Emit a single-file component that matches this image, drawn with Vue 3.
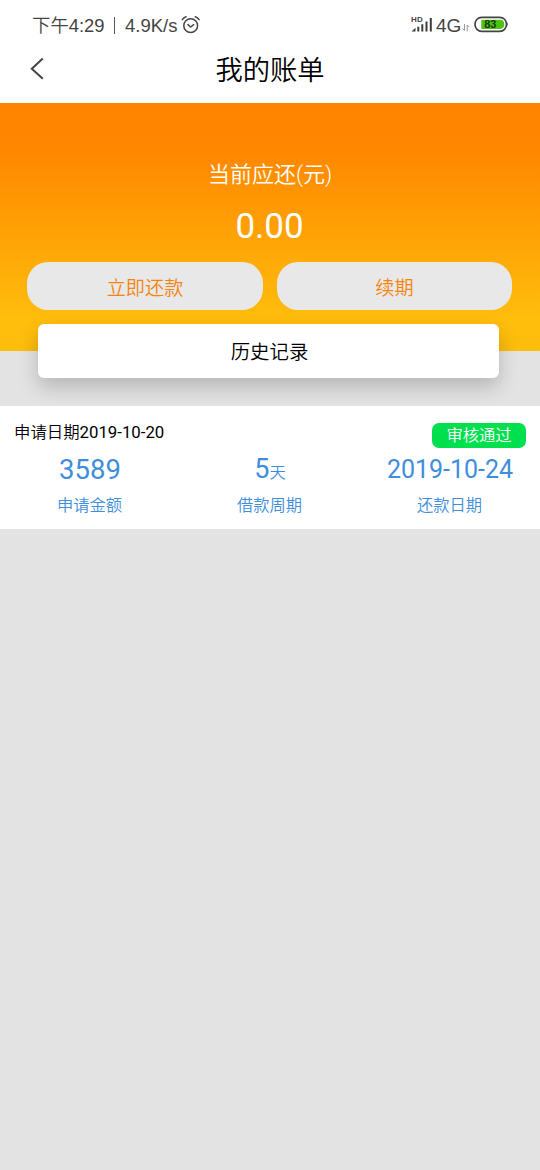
<script setup>
const stats = [
  { value: '3589', unit: '', label: '申请金额', kind: 'amount' },
  { value: '5', unit: '天', label: '借款周期', kind: 'term' },
  { value: '2019-10-24', unit: '', label: '还款日期', kind: 'due' },
]
</script>

<template>
  <div class="screen">
    <header>
      <div class="status">
        <span class="clock">下午4:29</span>
        <i class="divider"></i>
        <span class="speed">4.9K/s</span>
        <svg class="alarm" width="20" height="20" viewBox="0 0 20 20" fill="none" stroke="#444" stroke-width="1.5" stroke-linecap="round" stroke-linejoin="round">
          <circle cx="9.7" cy="10.7" r="6.9" />
          <path d="M7 9.6 9.7 12l3-2.3M1.3 4.7Q2.7 2.5 5.1 1.8M18.1 4.7Q16.7 2.5 14.3 1.8" />
        </svg>
        <span class="spacer"></span>
        <span class="signal">
          <b>HD</b>
          <svg width="22" height="16" viewBox="0 0 22 16" fill="#3c3c3c">
            <path d="M0.5 14.5 4.5 10.7v3.8zM6.3 9.7h2v4.8h-2zM10.3 7.2h2v7.3h-2zM14.5 4.4h2v10.1h-2zM18.8 1h2v13.5h-2z" />
          </svg>
        </span>
        <span class="net">4G</span>
        <svg class="updown" width="8" height="8" viewBox="0 0 8 8" fill="none" stroke="#999" stroke-width="1">
          <path d="M2.5 0v6.5L.5 4.5M5.2 7.5V1l2 2" />
        </svg>
        <svg class="battery" width="36" height="18" viewBox="0 0 36 18">
          <rect x="1" y="1.3" width="31.5" height="14" rx="6.7" fill="#fff" stroke="#444" stroke-width="1.7" />
          <path d="M33.4 5.8q1.5 2.5 0 5z" fill="#444" />
          <path d="M7.3 3.7H26q4.3 0 4.3 4.6T26 12.9H7.3z" fill="#4fc314" />
          <text x="16.3" y="12.3" text-anchor="middle">83</text>
        </svg>
      </div>
      <div class="nav">
        <svg class="back" width="16" height="24" viewBox="0 0 16 24" fill="none" stroke="#444" stroke-width="2">
          <path d="M12.8 1.4 1.8 11.7 12.8 21.8" />
        </svg>
        <h1>我的账单</h1>
      </div>
    </header>

    <section class="hero">
      <p class="caption">当前应还(元)</p>
      <p class="total">0.00</p>
      <div class="actions">
        <button>立即还款</button>
        <button>续期</button>
      </div>
    </section>

    <div class="history">历史记录</div>

    <article class="record">
      <div class="top">
        <span class="applied">申请日期<span class="date">2019-10-20</span></span>
        <span class="badge">审核通过</span>
      </div>
      <div class="stats">
        <div v-for="s in stats" :key="s.kind" class="stat">
          <div class="value" :class="s.kind">{{ s.value }}<small v-if="s.unit">{{ s.unit }}</small></div>
          <div class="label">{{ s.label }}</div>
        </div>
      </div>
    </article>
  </div>
</template>

<style>
body { background: #e3e3e3; }
</style>

<style scoped>
* { box-sizing: border-box; }
.screen {
  height: 1170px;
  background: #e3e3e3;
  color: #000;
  font-family: Roboto, "Noto Sans CJK SC", sans-serif;
  font-weight: 400;
  overflow: hidden;
}
p, h1 { margin: 0; font-weight: inherit; }
header { height: 103px; background: #fff; }
.status {
  height: 50px;
  padding: 0 30px 0 32px;
  display: flex;
  align-items: center;
  color: #444;
  white-space: nowrap;
  font-family: "Liberation Sans", "Noto Sans CJK SC", sans-serif;
  font-size: 19px;
  line-height: 24px;
}
.clock { width: 73px; padding-top: 1px; font-size: 18.4px; font-weight: 350; }
.divider { width: 1px; height: 17px; margin: 0 10px 0 9px; background: #555; }
.speed { width: 56px; padding-top: 1px; font-size: 18.5px; }
.spacer { flex: 1; }
.signal { position: relative; width: 22px; height: 16px; margin-right: 3px; }
.signal svg { display: block; }
.signal b { position: absolute; left: 0; top: -1px; font-size: 8px; line-height: 8px; letter-spacing: 0.2px; }
.net { width: 26px; padding-top: 1px; }
.updown { margin: 6px 4px 0 0; }
.battery { width: 36px; }
.battery text { font: bold 11px "Liberation Sans", sans-serif; fill: #143c08; }
.nav { height: 53px; display: flex; align-items: flex-start; }
.back { margin: 7px 0 0 30px; }
h1 { flex: 1; margin: 1px 46px 0 0; text-align: center; font-size: 27.3px; font-weight: 350; line-height: 40px; }
.hero {
  height: 248px;
  padding-top: 56px;
  background: linear-gradient(#ff8400 0%, #ff8600 18%, #ffbe0c 88%, #fdbd0d 100%);
  color: #fff;
  text-align: center;
}
.caption { font-size: 22px; font-weight: 350; line-height: 32px; }
.total { margin-top: 15px; padding-right: 1px; font-size: 35px; line-height: 42px; }
.actions { display: grid; grid-template-columns: 236px 235px; gap: 14px; margin: 14px 0 0 27px; }
button {
  height: 48px;
  padding: 1px 0 0;
  border: 0;
  border-radius: 21px;
  background: #e8e8e8;
  color: #f5840c;
  font: inherit;
  font-size: 19.2px;
  font-weight: 350;
}
.history {
  position: relative;
  width: 461px;
  height: 54px;
  margin: -27px 0 28px 38px;
  padding: 2px 0 0 2px;
  border-radius: 6px;
  background: #fff;
  box-shadow: 0 9px 20px rgba(0, 0, 0, 0.2);
  font-size: 19.4px;
  font-weight: 350;
  line-height: 54px;
  text-align: center;
}
.record { height: 123px; background: #fff; }
.top { height: 45px; padding: 0 14px; display: flex; justify-content: space-between; }
.applied { padding-top: 14px; font-size: 16.4px; font-weight: 350; line-height: 24px; }
.date { font-size: 16.8px; font-weight: 400; }
.badge {
  width: 94px;
  height: 25px;
  margin-top: 17px;
  border-radius: 7px;
  background: #00e04f;
  color: #fff;
  font-size: 16.3px;
  font-weight: 350;
  line-height: 25px;
  text-align: center;
}
.stats { display: grid; grid-template-columns: repeat(3, 1fr); color: #3f8edc; text-align: center; }
.value { height: 38px; line-height: 38px; white-space: nowrap; }
.amount { font-size: 27.5px; }
.term { font-size: 27px; line-height: 36px; }
.term small { font-size: 16.3px; font-weight: 350; }
.due { font-size: 25px; }
.label { padding: 1px 1px 0 0; font-size: 16.3px; font-weight: 350; line-height: 32px; }
</style>
